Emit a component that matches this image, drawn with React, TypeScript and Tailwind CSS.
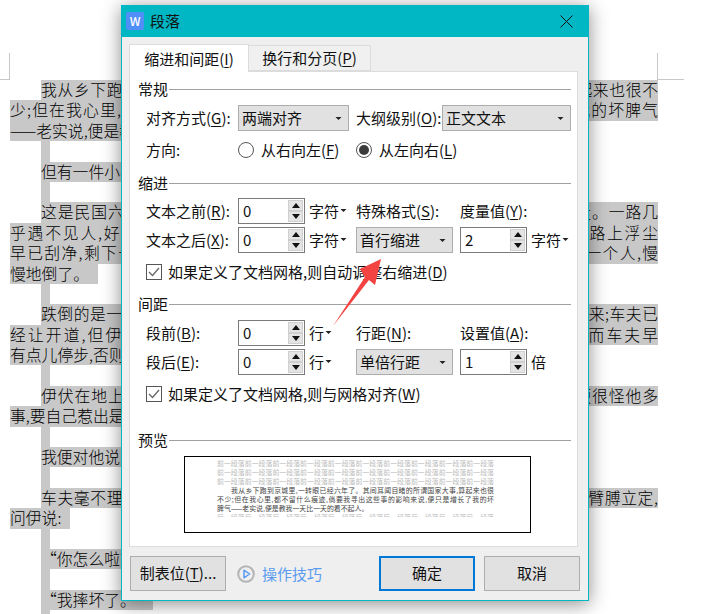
import React from 'react'

const font = "font-['Noto_Sans_CJK_SC','Noto_Sans',sans-serif]"

// rows of the document behind the dialog
const docRows = [
  { text: "我从乡下跑到京城里,一转眼已经六年了。其间耳闻目睹的所谓国家大事,算起来也很不", indent: true, full: true },
  { text: "少;但在我心里,都不留什么痕迹,倘要我寻出这些事的影响来说,便只是增长了我的坏脾气", full: true },
  { text: "——老实说,便是教我一天比一天的看不起人。" },
  { blank: true },
  { text: "但有一件小事,却于我有意义,将我从坏脾气里拖开,使我至今忘记不得。", indent: true },
  { blank: true },
  { text: "这是民国六年的冬天,大北风刮得正猛,我因为生计关系,不得不一早在路上走。一路几", indent: true, full: true },
  { text: "乎遇不见人,好容易才雇定了一辆人力车,叫他拉到S门去。不一会,北风小了,路上浮尘", full: true },
  { text: "早已刮净,剩下一条洁白的大道来,车夫也跑得更快。刚近S门,忽而车把上带着一个人,慢", full: true },
  { text: "慢地倒了。" },
  { blank: true },
  { text: "跌倒的是一个老女人,花白头发,衣服都很破烂。伊从马路上突然向车前横截过来;车夫已", indent: true, full: true },
  { text: "经让开道,但伊的破棉背心没有上扣,微风吹着,向外展开,所以兜着车把。幸而车夫早", full: true },
  { text: "有点儿停步,否则伊定要栽一个大筋斗,跌到头破血出了。" },
  { blank: true },
  { text: "伊伏在地上;车夫便也立住脚。我料定这老女人并没有伤,又没有别人看见,便很怪他多", indent: true, full: true },
  { text: "事,要自己惹出是非,也误了我的路。" },
  { blank: true },
  { text: "我便对他说,“没有什么的。走你的罢!”", indent: true },
  { blank: true },
  { text: "车夫毫不理会,——或者并没有听到,——却放下车子,扶那老女人慢慢起来,搀着臂膊立定,", indent: true, full: true },
  { text: "问伊说:" },
  { blank: true },
  { text: "“你怎么啦?”", indent: true },
  { blank: true },
  { text: "“我摔坏了。”", indent: true },
  { blank: true },
]

const DocRow = ({ row }: { row: { text?: string; indent?: boolean; full?: boolean; blank?: boolean } }) => {
  if (row.blank) {
    return <div className="h-[20.4px] w-[9px] ml-[31px] bg-[#c8c8c8]" />
  }
  return (
    <div className={`h-[20.4px] whitespace-nowrap bg-[#c8c8c8] ${row.indent ? "ml-[31px]" : ""} ${
      row.full
        ? `[text-align-last:justify] ${row.indent ? "w-[617px]" : "w-[648px]"}`
        : "w-fit pr-[9px]"
    }`}>
      {row.text}
    </div>
  )
}

const Arrow = ({ small }: { small?: boolean }) => (
  <svg width={small ? 7 : 9} height={small ? 3 : 5} viewBox="0 0 8 4" className="shrink-0">
    <path d="M0 0H8L4 4Z" fill="#222" />
  </svg>
)

const SectionTitle = ({ title }: { title: string }) => (
  <div className="h-5 flex items-center gap-px">
    <span className="w-[30px] leading-5">{title}</span>
    <div className="flex-1 h-px bg-[#a0a0a0]" />
  </div>
)

const Select = ({ value, width }: { value: string; width: string }) => (
  <div className={`${width} h-[26px] shrink-0 flex items-center justify-between pl-[3px] pr-[6px] bg-[#e1e1e1] border border-[#adadad]`}>
    <span className="leading-5">{value}</span>
    <Arrow small />
  </div>
)

const SpinBtn = ({ up }: { up?: boolean }) => (
  <div className="flex-1 flex items-center justify-center bg-[#e4e4e4] border border-[#d0d0d0]">
    <svg width="8" height="5" viewBox="0 0 8 5">
      <path d={up ? "M0 5H8L4 0Z" : "M0 0H8L4 5Z"} fill="#111" />
    </svg>
  </div>
)

const Spin = ({ value }: { value: string }) => (
  <div className="w-[67px] h-[26px] shrink-0 flex items-center justify-between pl-[4px] pr-[1px] bg-white border border-[#7a7a7a]">
    <span className="leading-5">{value}</span>
    <div className="w-[15px] h-[22px] flex flex-col">
      <SpinBtn up />
      <SpinBtn />
    </div>
  </div>
)

const Unit = ({ text }: { text: string }) => (
  <span className="flex items-center gap-px ml-1 leading-5">
    {text}
    <span className="mt-[-2px]"><Arrow small /></span>
  </span>
)

const Label = ({ before, k, after = "):", width }: { before: string; k: string; after?: string; width: string }) => (
  <span className={`${width} shrink-0 leading-5 whitespace-nowrap`}>
    {before}(<u className="underline-offset-2">{k}</u>{after}
  </span>
)

const Radio = ({ checked }: { checked?: boolean }) => (
  <span className="w-4 h-4 shrink-0 rounded-full border border-[#555] bg-white flex items-center justify-center">
    {checked && <span className="w-[10px] h-[10px] rounded-full bg-[#3c3c3c]" />}
  </span>
)

const CheckRow = ({ children }: { children: React.ReactNode }) => (
  <div className="h-[18px] flex items-center gap-[6px] pl-2 whitespace-nowrap">
    <span className="w-4 h-4 shrink-0 border border-[#555] bg-white flex items-center justify-center">
      <svg width="12" height="10" viewBox="0 0 12 10">
        <path d="M1 5L4.5 8.5L11 1" fill="none" stroke="#666" strokeWidth="1.3" />
      </svg>
    </span>
    <span className="leading-5">{children}</span>
  </div>
)

const Button = ({ children, primary }: { children: React.ReactNode; primary?: boolean }) => (
  <div className={`w-[96px] h-[35px] flex items-center justify-center bg-[#e1e1e1] border ${
    primary ? "border-2 border-[#0078d7]" : "border-[#adadad]"
  }`}>
    {children}
  </div>
)

const grayLine = "前一段落".repeat(10)

const App = () => {
  return (
    <div className={`relative h-[614px] w-[706px] overflow-hidden bg-white text-[#111] ${font}`}>

      {/* Document behind the dialog */}
      <div className="pt-[53px] pl-0 text-[15.8px] leading-[20.4px] font-light text-black">
        <div className="h-[27px] flex justify-between pr-[22px]">
          <div className="w-[10px] border-r border-b border-[#c8c8c8]" />
          <div className="w-[27px] border-l border-b border-[#c8c8c8]" />
        </div>
        <div className="pl-[10px]">
          {docRows.map((row, i) => (
            <DocRow key={i} row={row} />
          ))}
        </div>
      </div>

      {/* Dialog window */}
      <div className="absolute left-[121px] top-[5px] w-[468px] h-[596px] flex flex-col bg-[#efefef] border border-[#00b7c3] border-t-0 text-[15px] shadow-[0_3px_18px_rgba(0,0,0,0.45)]">
        <div className="h-[32px] shrink-0 flex items-center bg-[#00b7c3] pl-[4px] pr-[15px]">
          <div className="w-[18px] h-[18px] rounded-[2px] bg-[#4f8ff7] flex items-center justify-center text-white text-[12px] font-medium leading-none">
            W
          </div>
          <span className="ml-[6px] leading-5">段落</span>
          <svg width="13" height="13" viewBox="0 0 13 13" className="ml-auto">
            <path d="M0.5 0.5L12.5 12.5M12.5 0.5L0.5 12.5" stroke="#111" strokeWidth="1" />
          </svg>
        </div>

        <div className="flex-1 flex flex-col pl-[7px] pr-[10px] pt-[7px]">
          {/* Tabs */}
          <div className="h-[27px] flex items-end relative z-10">
            <div className="w-[120px] h-[28px] mb-[-1px] flex items-center justify-center bg-white border border-[#dcdcdc] border-b-0">
              <span className="leading-5">缩进和间距(<u className="underline-offset-2">I</u>)</span>
            </div>
            <div className="w-[122px] h-[26px] flex items-center justify-center bg-[#f0f0f0] border border-[#dcdcdc] border-l-0">
              <span className="leading-5">换行和分页(<u className="underline-offset-2">P</u>)</span>
            </div>
          </div>

          {/* Panel */}
          <div className="h-[476px] bg-white border border-[#dcdcdc] pl-2 pr-[6px] pt-[7px]">
            <SectionTitle title="常规" />
            <div className="mt-[6px] flex items-center pl-2">
              <Label before="对齐方式" k="G" width="w-[92px]" />
              <Select value="两端对齐" width="w-[111px]" />
              <Label before="大纲级别" k="O" width="w-[86px] ml-[7px]" />
              <Select value="正文文本" width="w-[129px]" />
            </div>
            <div className="mt-[6px] h-[26px] flex items-center pl-2">
              <span className="w-[92px] leading-5">方向:</span>
              <Radio />
              <span className="ml-[7px] w-[95px] leading-5">从右向左(<u className="underline-offset-2">F</u>)</span>
              <Radio checked />
              <span className="ml-[7px] leading-5">从左向右(<u className="underline-offset-2">L</u>)</span>
            </div>

            <div className="mt-[10px]"><SectionTitle title="缩进" /></div>
            <div className="mt-[5px] flex items-center pl-2">
              <Label before="文本之前" k="R" width="w-[92px]" />
              <Spin value="0" />
              <div className="w-[51px]"><Unit text="字符" /></div>
              <Label before="特殊格式" k="S" width="w-[104px]" />
              <Label before="度量值" k="Y" width="w-[90px]" />
            </div>
            <div className="mt-[3px] flex items-center pl-2">
              <Label before="文本之后" k="X" width="w-[92px]" />
              <Spin value="0" />
              <div className="w-[51px]"><Unit text="字符" /></div>
              <Select value="首行缩进" width="w-[97px]" />
              <div className="w-[7px]" />
              <Spin value="2" />
              <Unit text="字符" />
            </div>
            <div className="mt-[10px]">
              <CheckRow>如果定义了文档网格,则自动调整右缩进(<u className="underline-offset-2">D</u>)</CheckRow>
            </div>

            <div className="mt-[13px]"><SectionTitle title="间距" /></div>
            <div className="mt-[6px] flex items-center pl-2">
              <Label before="段前" k="B" width="w-[92px]" />
              <Spin value="0" />
              <div className="w-[51px]"><Unit text="行" /></div>
              <Label before="行距" k="N" width="w-[104px]" />
              <Label before="设置值" k="A" width="w-[90px]" />
            </div>
            <div className="mt-[3px] flex items-center pl-2">
              <Label before="段后" k="E" width="w-[92px]" />
              <Spin value="0" />
              <div className="w-[51px]"><Unit text="行" /></div>
              <Select value="单倍行距" width="w-[97px]" />
              <div className="w-[7px]" />
              <Spin value="1" />
              <span className="ml-1 leading-5">倍</span>
            </div>
            <div className="mt-[10px]">
              <CheckRow>如果定义了文档网格,则与网格对齐(<u className="underline-offset-2">W</u>)</CheckRow>
            </div>

            <div className="mt-[27px]"><SectionTitle title="预览" /></div>
            <div className="mt-[6px] ml-[46px] w-[347px] h-[77px] border-[1.5px] border-black bg-white pl-[32px] pt-[2px]">
              <div className="w-[277px] h-[58px] overflow-hidden text-[6.9px] leading-[9px] text-[#444] whitespace-nowrap">
                {[1, 2, 3].map((i) => (
                  <div key={i} className="text-[#bbb] [text-align-last:justify]">{grayLine}</div>
                ))}
                <div className="pl-[14px] [text-align-last:justify]">我从乡下跑到京城里,一转眼已经六年了。其间耳闻目睹的所谓国家大事,算起来也很</div>
                <div className="[text-align-last:justify]">不少;但在我心里,都不留什么痕迹,倘要我寻出这些事的影响来说,便只是增长了我的坏</div>
                <div>脾气——老实说,便是教我一天比一天的看不起人。</div>
                <div className="text-[#bbb] [text-align-last:justify]">{"后一段落".repeat(10)}</div>
              </div>
            </div>
          </div>

          {/* Footer buttons */}
          <div className="mt-[9px] flex items-center pl-px">
            <Button>制表位(<u className="underline-offset-2">T</u>)...</Button>
            <svg width="18" height="18" viewBox="0 0 18 18" className="ml-[11px]">
              <circle cx="9" cy="9" r="7.8" fill="none" stroke="#b4b4b4" strokeWidth="2" />
              <path d="M7 5.2L12.6 9L7 12.8Z" fill="none" stroke="#5b9bf0" strokeWidth="1.5" strokeLinejoin="round" />
            </svg>
            <span className="ml-[7px] text-[#5b9bf0] leading-5">操作技巧</span>
            <div className="ml-auto flex gap-[9px] mr-[-2px]">
              <Button primary>确定</Button>
              <Button>取消</Button>
            </div>
          </div>
        </div>
      </div>

      {/* Red annotation arrow */}
      <svg width="60" height="76" viewBox="0 0 60 76" className="absolute left-[328px] top-[255px] pointer-events-none">
        <path d="M5 71L37 22L32 14L53 4L47 30L41 25Z" fill="#f44343" />
      </svg>
    </div>
  )
}

export default App
